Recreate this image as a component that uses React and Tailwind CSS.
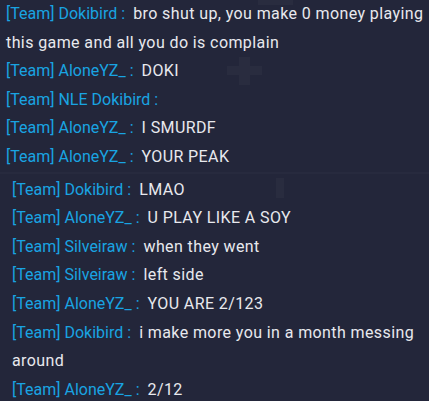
const firstBlock = [
  { name: 'Dokibird', text: 'bro shut up, you make 0 money playing this game and all you do is complain' },
  { name: 'AloneYZ_', text: 'DOKI' },
  { name: 'NLE Dokibird', text: '' },
  { name: 'AloneYZ_', text: 'I SMURDF' },
  { name: 'AloneYZ_', text: 'YOUR PEAK' },
];

const secondBlock = [
  { name: 'Dokibird', text: 'LMAO' },
  { name: 'AloneYZ_', text: 'U PLAY LIKE A SOY' },
  { name: 'Silveiraw', text: 'when they went' },
  { name: 'Silveiraw', text: 'left side' },
  { name: 'AloneYZ_', text: 'YOU ARE 2/123' },
  { name: 'Dokibird', text: 'i make more you in a month messing around' },
  { name: 'AloneYZ_', text: '2/12' },
];

function ChatLine({ name, text }) {
  return (
    <p className="leading-[28.6px]">
      <span className="text-[#19a4e2]">
        [Team] {name}
        <span className="ml-[4px] mr-[8px]">:</span>
      </span>
      <span className="text-[#e8e9ee] tracking-[0.4px]">{text}</span>
    </p>
  );
}

export default function App() {
  return (
    <div
      className="relative w-[429px] h-[401px] overflow-hidden bg-[#23263a] text-[16px]"
      style={{ fontFamily: 'Roboto, "Noto Sans", sans-serif' }}
    >
      {/* faint plus marks of the game backdrop */}
      <svg className="absolute inset-0" width="429" height="401" viewBox="0 0 429 401">
        <g fill="#292c3f">
          <rect x="239" y="57" width="11" height="28" />
          <rect x="227" y="66" width="35" height="9" />
          <rect x="270" y="0" width="11" height="5" />
          <rect x="258" y="-4" width="35" height="9" />
          <rect x="276" y="178" width="8" height="20" />
        </g>
      </svg>
      <div className="relative flex flex-col">
        <div className="pl-[6px]">
          {firstBlock.map((m, i) => (
            <ChatLine key={i} {...m} />
          ))}
        </div>
        <div className="pt-[2px] pl-[12px] border-t-2 border-[#272a3e]">
          {secondBlock.map((m, i) => (
            <ChatLine key={i} {...m} />
          ))}
        </div>
      </div>
    </div>
  );
}
